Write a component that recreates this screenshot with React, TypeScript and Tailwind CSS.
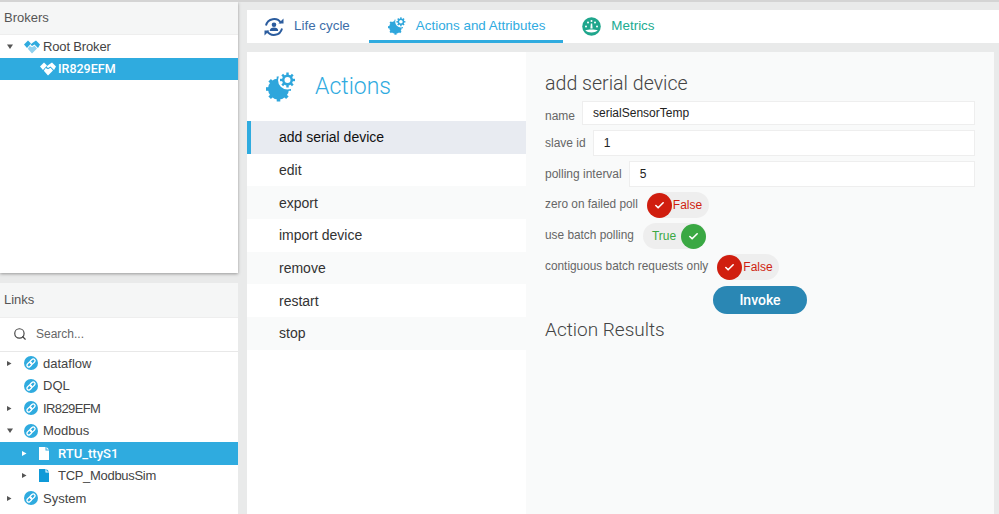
import React from "react";
import { Search, Check } from "lucide-react";

const Caret = ({ open, light, hidden }: { open?: boolean; light?: boolean; hidden?: boolean }) => (
  <svg width="7" height="7" viewBox="0 0 7 7" className={hidden ? "opacity-0" : ""}>
    {open ? <path d="M0 1.500h6L3 6z" fill="#555" /> : <path d="M0 1l4.500 2.500L0 6z" fill={light ? "#fff" : "#555"} />}
  </svg>
);

const Shake = ({ white }: { white?: boolean }) => {
  const a = white ? "#ffffff" : "#2fabdf";
  const b = white ? "#ffffff" : "#8fd0ee";
  return (
    <svg width="16" height="14" viewBox="0 0 16 14" className="shrink-0">
      <path d="M0 4.500L4 .5l3 3L3 8z" fill={a} />
      <path d="M16 4.500L12 .5 9 2.500 6.500 4.500 8 6l2.500-1.500L14 8z" fill={a} />
      <path d="M3.800 8.700L8 13.500l5-5-2.500-2.800L8 7.300 5.700 6z" fill={b} />
    </svg>
  );
};

const LinkDot = () => (
  <svg width="14" height="14" viewBox="0 0 14 14" fill="none" className="shrink-0">
    <circle cx="7" cy="7" r="7" fill="#2fabdf" />
    <g transform="rotate(-45 7 7)" stroke="#fff" strokeWidth="1.300">
      <rect x="2" y="5.200" width="5.500" height="3.600" rx="1.800" />
      <rect x="6.500" y="5.200" width="5.500" height="3.600" rx="1.800" />
    </g>
  </svg>
);

const FileIcon = ({ color }: { color: string }) => (
  <svg width="10" height="13" viewBox="0 0 10 13" className="shrink-0">
    <path d="M0 0h6.500v3.500H10V13H0z" fill={color} />
    <path d="M7.500 0L10 2.500H7.500z" fill={color} />
  </svg>
);

const Gears = ({ size, color }: { size: number; color: string }) => {
  const teeth = (cx: number, cy: number, r: number, w: number, n: number) =>
    Array.from({ length: n }).map((_, i) => (
      <rect key={i} x={cx - w / 2} y={cy - r} width={w} height={r * 2} fill={color} transform={`rotate(${(i * 180) / n} ${cx} ${cy})`} />
    ));
  return (
    <svg width={size} height={size} viewBox="0 0 30 30" className="shrink-0">
      {teeth(12.500, 17, 12.500, 3.600, 4)}
      <circle cx="12.500" cy="17" r="10.500" fill={color} />
      <circle cx="21.500" cy="8" r="9.500" fill="#fff" />
      {teeth(21.500, 8, 7.500, 2.400, 4)}
      <circle cx="21.500" cy="8" r="5.500" fill={color} />
      <circle cx="21.500" cy="8" r="3" fill="#fff" />
    </svg>
  );
};

const Cycle = () => (
  <svg width="20" height="20" viewBox="0 0 20 20" fill="none" className="shrink-0">
    <path d="M2 8.500A8.200 8.200 0 0 1 17 6" stroke="#2b5c9e" strokeWidth="1.900" />
    <path d="M18 11.500A8.200 8.200 0 0 1 3 14" stroke="#2b5c9e" strokeWidth="1.900" />
    <path d="M14.500 6.500H19.500V1.500z" fill="#2b5c9e" />
    <path d="M5.500 13.500H.5V18.500z" fill="#2b5c9e" />
    <circle cx="10" cy="7.800" r="2.300" fill="#2b5c9e" />
    <path d="M5.800 14c0-2.600 2-3.400 4.200-3.400s4.200.8 4.200 3.400z" fill="#2b5c9e" />
  </svg>
);

const Gauge = () => (
  <svg width="19" height="19" viewBox="0 0 19 19" className="shrink-0">
    <circle cx="9.500" cy="9.500" r="9.300" fill="#1fa68c" />
    <path d="M3.200 13.300c3-1.200 9.600-1.200 12.600 0-1.600 1.500-3.800 2.200-6.300 2.200s-4.700-.7-6.300-2.200z" fill="#fff" />
    <g fill="#fff">
      <circle cx="4" cy="9.500" r="1" />
      <circle cx="6" cy="5.500" r="1" />
      <circle cx="9.500" cy="4" r="1" />
      <circle cx="13" cy="5.500" r="1" />
      <circle cx="15" cy="9.500" r="1" />
      <path d="M8.800 6.500h1.400l.4 5H8.400z" />
    </g>
  </svg>
);

const Row = ({ indent = "pl-[7px]", caret, open, label, icon, selected, track = "", height = "h-[22.500px]" }: { indent?: string; caret?: boolean; open?: boolean; label: string; icon: React.ReactNode; selected?: boolean; track?: string; height?: string }) => (
  <div className={`flex items-center ${height} ${indent} text-[13px] ${selected ? "bg-[#2fabdf] font-['Roboto',sans-serif] font-medium text-white" : "text-[#444]"}`}>
    <span className="flex w-[17px] shrink-0 items-center">
      <Caret open={open} light={selected} hidden={!caret} />
    </span>
    <span className="flex w-[19px] shrink-0 items-center">{icon}</span>
    <span className={track}>{label}</span>
  </div>
);

const Toggle = ({ value }: { value: boolean }) => (
  <span className={`flex h-[26px] items-center rounded-full bg-[#eeeeee] text-xs ${value ? "w-[63px] pl-[9px] text-[#3aa843]" : "w-[62px] text-[#cf1f10]"}`}>
    {value && <span className="mr-[5px]">True</span>}
    <span className={`flex h-[25px] w-[25px] shrink-0 items-center justify-center rounded-full ${value ? "bg-[#3aa843]" : "bg-[#d01e0f]"}`}>
      <Check size={11} color="#fff" strokeWidth={3.500} />
    </span>
    {!value && <span className="ml-[1px]">False</span>}
  </span>
);

const Field = ({ label, value, height = "h-[26px]", labelPad = "", top = "mt-[5px]", inputPad = "" }: { label: string; value: string; height?: string; labelPad?: string; top?: string; inputPad?: string }) => (
  <div className={`flex items-center gap-[7px] ${top}`}>
    <span className={`text-xs text-[#666] ${labelPad}`}>{label}</span>
    <div className={`flex flex-1 items-center border border-[#eeeeee] bg-white pl-[10px] text-xs text-[#222] ${height} ${inputPad}`}>{value}</div>
  </div>
);

const actions = ["add serial device", "edit", "export", "import device", "remove", "restart", "stop"];

export default function App() {
  return (
    <div className="flex h-[514px] w-[999px] overflow-hidden border-t-2 border-[#d4d4d4] bg-[#e9eaea] font-['Liberation_Sans',sans-serif]">
      <div className="flex w-[238px] shrink-0 flex-col gap-[10px]">
        <div className="flex h-[271px] flex-col bg-white shadow-[0_1px_3px_rgba(0,0,0,0.35)]">
          <div className="flex h-[33px] items-center border-b border-[#eeeeee] bg-[#f5f6f6] pl-1 text-[13px] text-[#555]">Brokers</div>
          <Row label="Root Broker" caret open icon={<Shake />} track="tracking-[-0.15px]" height="h-[23px]" />
          <div className="flex h-[22px] items-center bg-[#2fabdf] pl-[40px] font-['Roboto',sans-serif] text-[12.500px] font-medium text-white">
            <Shake white />
            <span className="ml-[2px]">IR829EFM</span>
          </div>
        </div>
        <div className="flex flex-1 flex-col bg-white">
          <div className="flex h-[35px] shrink-0 items-center border-b border-[#eeeeee] bg-[#f5f6f6] pl-1 text-[13px] text-[#555]">Links</div>
          <div className="flex h-[34px] shrink-0 items-center border-b border-[#e8e8e8] pb-[1px] pl-[13px] text-xs text-[#666]">
            <Search size={14} color="#444" />
            <span className="ml-[9px]">Search...</span>
          </div>
          <Row label="dataflow" caret icon={<LinkDot />} />
          <Row label="DQL" icon={<LinkDot />} />
          <Row label="IR829EFM" caret icon={<LinkDot />} track="tracking-[-0.6px]" />
          <Row label="Modbus" caret open icon={<LinkDot />} />
          <Row indent="pl-[22px]" label="RTU_ttyS1" caret selected icon={<FileIcon color="#fff" />} />
          <Row indent="pl-[22px]" label="TCP_ModbusSim" caret icon={<FileIcon color="#0f9ad8" />} track="tracking-[-0.3px]" />
          <Row label="System" caret icon={<LinkDot />} />
        </div>
      </div>

      <div className="ml-[9px] flex flex-1 flex-col gap-[9px] pt-2">
        <div className="flex h-[33px] shrink-0 bg-white pl-[17px] text-[13.400px]">
          <div className="flex items-center gap-[10px] text-[#3d6ea8]">
            <Cycle />
            <span>Life cycle</span>
          </div>
          <div className="ml-[19px] flex items-center gap-[10px] border-b-[3px] border-[#2fabdf] pl-[19px] pr-[18px] pt-[2px] text-[#2fabdf]">
            <Gears size={18} color="#2ea6dc" />
            <span>Actions and Attributes</span>
          </div>
          <div className="ml-[19px] flex items-center gap-[10px] text-[#21ab91]">
            <Gauge />
            <span>Metrics</span>
          </div>
        </div>
        <div className="flex flex-1 pr-[5px]">
          <div className="w-[279px] shrink-0 bg-white">
            <div className="flex h-[69px] items-center pl-[19px]">
              <Gears size={30} color="#2ea6dc" />
              <span className="ml-[19px] pt-[2px] font-['Roboto',sans-serif] text-[23px] font-light text-[#2fabdf]">Actions</span>
            </div>
            {actions.map((a, i) => (
              <div
                key={a}
                className={`flex h-[32.700px] items-center text-sm ${i === 0 ? "border-l-4 border-[#2fabdf] bg-[#e8ebf1] pl-7 text-[#111]" : "pl-8 text-[#333]"} ${i > 0 && i % 2 === 0 ? "bg-[#f9fafa]" : ""}`}
              >
                {a}
              </div>
            ))}
          </div>
          <div className="flex-1 bg-[#f9fafa] px-[19px]">
            <div className="pt-[20px] font-['Roboto',sans-serif] text-[19.600px] font-light leading-[24px] text-[#444]">add serial device</div>
            <Field label="name" value="serialSensorTemp" height="h-[24px]" labelPad="pt-[6px]" top="mt-[5px]" inputPad="pb-[1px]" />
            <Field label="slave id" value="1" />
            <Field label="polling interval" value="5" />
            <div className="mt-[5px] flex items-center gap-[9px] text-[11.850px] text-[#666]">
              <span>zero on failed poll</span>
              <Toggle value={false} />
            </div>
            <div className="mt-[5px] flex items-center gap-[9px] text-[11.850px] text-[#666]">
              <span>use batch polling</span>
              <Toggle value={true} />
            </div>
            <div className="mt-[5px] flex items-center gap-[9px] text-[11.850px] text-[#666]">
              <span>contiguous batch requests only</span>
              <Toggle value={false} />
            </div>
            <div className="mt-[6px] flex justify-center">
              <div className="flex h-[28px] w-[94px] items-center justify-center rounded-full bg-[#2a87b4] font-['Roboto',sans-serif] text-sm font-medium text-white">Invoke</div>
            </div>
            <div className="mt-[4px] font-['Roboto',sans-serif] text-[19px] font-light leading-[24px] text-[#444]">Action Results</div>
          </div>
        </div>
      </div>
    </div>
  );
}
